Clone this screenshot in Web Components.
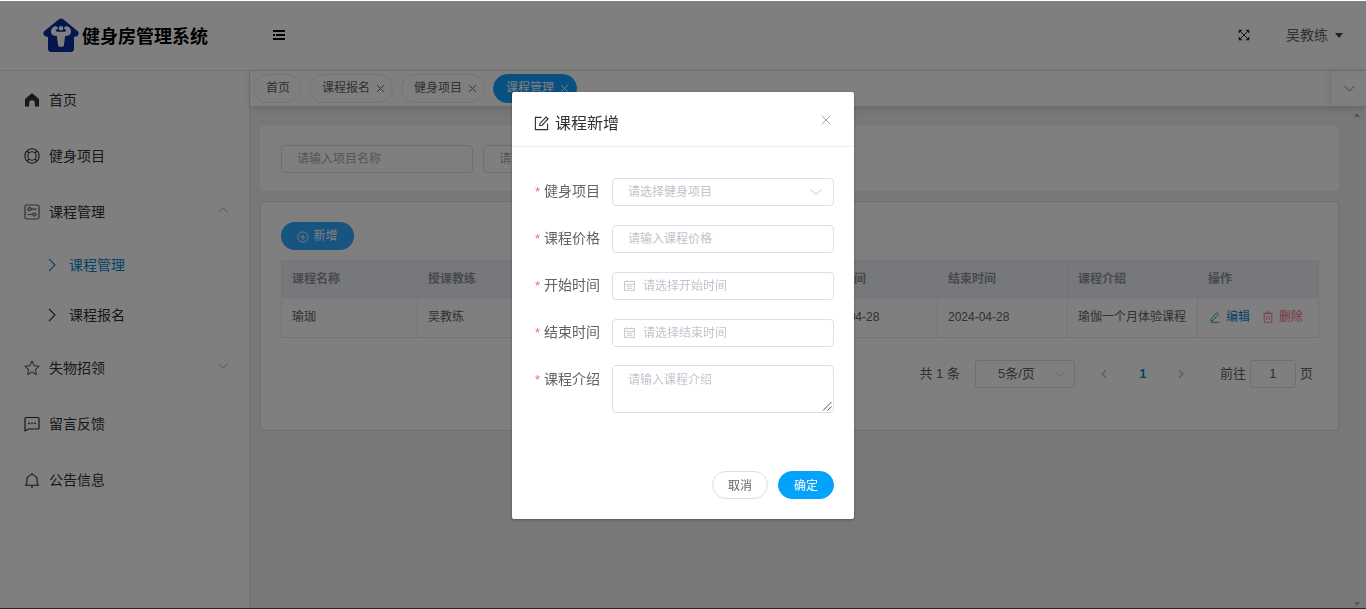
<!DOCTYPE html>
<html lang="zh">
<head>
<meta charset="utf-8">
<title>健身房管理系统</title>
<style>
  html, body { margin: 0; height: 100%; overflow: hidden; background: #1f2a33; }
  body { font-family: "Liberation Sans", "Noto Sans CJK SC", sans-serif; line-height: 1.2; color: #606266; }
</style>
</head>
<body>
<gym-app>
  <app-header slot="header" title="健身房管理系统" user="吴教练"></app-header>
  <side-menu slot="side">
    <menu-row icon="home">首页</menu-row>
    <menu-row icon="help">健身项目</menu-row>
    <menu-row icon="setup" arrow="up">课程管理</menu-row>
    <menu-row sub active>课程管理</menu-row>
    <menu-row sub>课程报名</menu-row>
    <menu-row icon="star" arrow="down">失物招领</menu-row>
    <menu-row icon="chat">留言反馈</menu-row>
    <menu-row icon="bell">公告信息</menu-row>
  </side-menu>
  <tag-bar slot="tabs">
    <tag-chip plain>首页</tag-chip>
    <tag-chip>课程报名</tag-chip>
    <tag-chip>健身项目</tag-chip>
    <tag-chip active>课程管理</tag-chip>
  </tag-bar>
  <search-card slot="main">
    <field-box width="192" muted>请输入项目名称</field-box>
    <field-box width="192" muted>请输入</field-box>
  </search-card>
  <course-card slot="main"></course-card>
</gym-app>
<modal-mask>
  <course-dialog title="课程新增">
    <form-row label="健身项目"><field-box kind="select">请选择健身项目</field-box></form-row>
    <form-row label="课程价格"><field-box>请输入课程价格</field-box></form-row>
    <form-row label="开始时间"><field-box kind="date">请选择开始时间</field-box></form-row>
    <form-row label="结束时间"><field-box kind="date">请选择结束时间</field-box></form-row>
    <form-row label="课程介绍" style="margin-top:-1px;--label-pad:1px"><field-box kind="area">请输入课程介绍</field-box></form-row>
  </course-dialog>
</modal-mask>

<script>
const ICONS = {
  home: '<path fill="currentColor" d="M8 1.500c.4 0 .7.1 1 .4l5.400 4.600c.4.3.6.8.6 1.300V14.500H10.800V11a2.800 2.800 0 0 0-5.600 0v3.500H1V7.800c0-.5.2-1 .6-1.300L7 1.900c.3-.3.6-.4 1-.4z"/>',
  help: '<g fill="none" stroke="currentColor" stroke-width="1.100"><circle cx="8" cy="8" r="7.200"/><circle cx="8" cy="8" r="4.200"/><path d="M3 3l2 2M13 3l-2 2M3 13l2-2M13 13l-2-2"/></g>',
  setup: '<g fill="none" stroke="currentColor" stroke-width="1.200"><rect x="1" y="1" width="14" height="14" rx="1.500"/><circle cx="5.500" cy="5.200" r="1.500"/><path d="M7 5.200h5.500M3.500 10.500h5.500"/><circle cx="10.500" cy="10.500" r="1.500"/></g>',
  star: '<path fill="none" stroke="currentColor" stroke-width="1.100" stroke-linejoin="round" d="M8 1l2.100 4.600 5 .6-3.700 3.400 1 5L8 12.100 3.600 14.600l1-5L.9 6.200l5-.6z"/>',
  chat: '<path fill="none" stroke="currentColor" stroke-width="1.200" stroke-linejoin="round" d="M1 2.500c0-.6.4-1 1-1h12c.6 0 1 .4 1 1v9.500c0 .6-.4 1-1 1H4.500L1 15z"/><g fill="currentColor"><circle cx="5" cy="7.300" r=".9"/><circle cx="8" cy="7.300" r=".9"/><circle cx="11" cy="7.300" r=".9"/></g>',
  bell: '<path fill="none" stroke="currentColor" stroke-width="1.100" d="M.6 13.300h14.800M2.800 13.300V8a5.200 5.200 0 0 1 10.400 0v5.300M8 1v1.700"/><circle cx="8" cy="15" r=".9" fill="currentColor"/>',
  left: '<path fill="none" stroke="currentColor" stroke-width="1.800" d="M10.500 3L5.500 8l5 5"/>',
  next: '<path fill="none" stroke="currentColor" stroke-width="1.800" d="M5.500 3l5 5-5 5"/>',
  up: '<path fill="none" stroke="currentColor" stroke-width="1" d="M2 11l6-6 6 6"/>',
  down: '<path fill="none" stroke="currentColor" stroke-width="1" d="M2 5l6 6 6-6"/>',
  close: '<path fill="none" stroke="currentColor" stroke-width="1.100" d="M2 2l12 12M14 2L2 14"/>',
  tagx: '<path fill="none" stroke="currentColor" stroke-width="1.700" d="M2 2l12 12M14 2L2 14"/>',
  edit: '<g fill="none" stroke="currentColor" stroke-width="1.200"><path d="M8 1.500H1.500v13h13V8"/><path d="M6 10.300l.5-2.600L13 1.200l2 2-6.400 6.600z"/></g>',
  date: '<g fill="none" stroke="currentColor" stroke-width="1.100"><rect x="2" y="3" width="12" height="11"/><path d="M2 6.500h12M5 1.500V3M11 1.500V3M4.500 9h7M4.500 11.500h7"/></g>',
  plus: '<g fill="none" stroke="currentColor" stroke-width="1.100"><circle cx="8" cy="8" r="6.800"/><path d="M8 4.500v7M4.500 8h7"/></g>',
  pen: '<path fill="none" stroke="currentColor" stroke-width="1.100" d="M3 10.500L10.500 2l2.300 2L5.300 12.500l-2.800.8zM2 15h12"/>',
  trash: '<g fill="none" stroke="currentColor" stroke-width="1.100"><path d="M1.500 3.500h13M5.500 3.500V1.500h5v2M3 3.500v11.500h10V3.500M6.300 6.500v5.500M9.700 6.500v5.500"/></g>',
  expand: '<g fill="none" stroke="currentColor" stroke-width="1.300"><path d="M3 3l10 10M13 3L3 13"/></g><g fill="currentColor"><path d="M1 1h5L1 6zM15 1v5l-5-5zM1 15v-5l5 5zM15 15h-5l5-5z"/></g>'
};

class GymIcon extends HTMLElement {
  constructor() {
    super();
    const size = this.getAttribute("size") || 16;
    const name = this.getAttribute("name");
    this.attachShadow({mode: "open"}).innerHTML = `
      <style>
        :host { display: inline-flex; flex: none; width: ${size}px; height: ${size}px; }
        svg { width: 100%; height: 100%; display: block; }
      </style>
      <svg viewBox="0 0 16 16">${ICONS[name] || ""}</svg>`;
  }
}
customElements.define("gym-icon", GymIcon);

class GymApp extends HTMLElement {
  constructor() {
    super();
    this.attachShadow({mode: "open"}).innerHTML = `
      <style>
        :host { display: grid; grid-template: 71px 1fr / 250px 1fr; height: 608px; background: #f0f0f0; position: relative; overflow: hidden; }
        .head { grid-column: 1 / 3; }
        .body { display: flex; flex-direction: column; min-width: 0; }
        .main { padding: 20px 27px 0 10px; display: flex; flex-direction: column; gap: 10px; }
        /* little scrollbar arrows at the right edge */
        .up, .dn { position: absolute; left: 1354px; width: 0; height: 0; border: 3.500px solid transparent; }
        .up { top: 113px; border-top: 0; border-bottom: 4px solid #aaa; }
        .dn { top: 602px; border-bottom: 0; border-top: 4px solid #aaa; }
      </style>
      <div class="head"><slot name="header"></slot></div>
      <slot name="side"></slot>
      <div class="body">
        <slot name="tabs"></slot>
        <div class="main"><slot name="main"></slot></div>
      </div>
      <i class="up"></i><i class="dn"></i>`;
  }
}
customElements.define("gym-app", GymApp);

class AppHeader extends HTMLElement {
  constructor() {
    super();
    this.attachShadow({mode: "open"}).innerHTML = `
      <style>
        :host { display: flex; align-items: center; height: 70px; background: #fff; border-bottom: 1px solid #e4e4e4; }
        .logo { margin: 0 0 0 43px; width: 36px; height: 34px; flex: none; }
        h1 { margin: 4px 0 0 3px; font-size: 18px; line-height: 24px; font-weight: 700; color: #000; white-space: nowrap; }
        .fold { margin-left: 65px; width: 12px; height: 10px; display: block; }
        .grow { flex: 1; }
        gym-icon { color: #222; }
        .user { margin-left: 36px; font-size: 14px; color: #606266; }
        .caret { margin: 0 23px 0 7px; width: 0; height: 0; border: 4px solid transparent; border-top: 5px solid #444; border-bottom: 0; }
      </style>
      <svg class="logo" viewBox="0 0 36 34">
        <path fill="#0a2a9e" d="M16 1.300c1.300-1.200 2.900-1.200 4.200 0l14.600 11.900c1.600 1.500 1 4.500-1.800 5.300L31 19v11.500c0 2-1 3.500-3 3.500H8c-2 0-3-1.500-3-3.500V19l-2-.5C.2 17.700-.4 14.700 1.200 13.200z"/>
        <path fill="#fff" d="M10.800 8.800c2-1 3.800-.3 4 1.200.1 1-.6 1.600-2 1.700-.1 1.300.9 2.100 2.200 2.100h6c1.300 0 2.300-.8 2.200-2.100-1.400-.1-2.100-.7-2-1.700.2-1.500 2-2.200 4-1.200 2.300 1.200 3.600 4.600 2.300 7-1 1.800-3.300 2.500-5.300 2l-1.300 9.500c-.1 1-.9 1.500-2.900 1.500s-2.800-.5-2.900-1.500L13.800 17.800c-2 .5-4.300-.2-5.300-2-1.300-2.400 0-5.800 2.300-7z"/>
        <circle cx="18" cy="10.300" r="2.300" fill="#fff"/>
      </svg>
      <h1>${this.getAttribute("title")}</h1>
      <svg class="fold" viewBox="0 0 12 10"><path fill="#000" d="M0 0h12v2H0zM3 4h9v2H3zM0 8h12v2H0zM0 4h2v2H0z"/></svg>
      <div class="grow"></div>
      <gym-icon name="expand" size="12"></gym-icon>
      <span class="user">${this.getAttribute("user")}</span>
      <span class="caret"></span>`;
  }
}
customElements.define("app-header", AppHeader);

class SideMenu extends HTMLElement {
  constructor() {
    super();
    this.attachShadow({mode: "open"}).innerHTML = `
      <style>
        :host { display: block; background: #fff; border-right: 1px solid #e6e6e6; padding-top: 1px; }
      </style>
      <slot></slot>`;
  }
}
customElements.define("side-menu", SideMenu);

class MenuRow extends HTMLElement {
  constructor() {
    super();
    const sub = this.hasAttribute("sub");
    const icon = this.getAttribute("icon");
    const arrow = this.getAttribute("arrow");
    const soft = icon === "setup" || icon === "star";
    this.attachShadow({mode: "open"}).innerHTML = `
      <style>
        :host { display: flex; align-items: center; height: 56px; padding-left: 24px; font-size: 14px; color: #303133; position: relative; }
        :host([sub]) { height: 50px; padding-left: 48px; }
        :host([active]) { color: #0a86cf; }
        .ic { margin-right: 9px; ${soft ? "color:#606266;" : ""} }
        :host([sub]) .ic { margin-right: 13px; width: 8px; height: 14px; }
        .arrow { position: absolute; left: 217px; top: 20px; color: #909399; }
        svg { display: block; }
      </style>
      ${sub
        ? `<svg class="ic" viewBox="0 0 8 14"><path fill="none" stroke="currentColor" stroke-width="1.100" d="M1 1l6 6-6 6"/></svg>`
        : `<gym-icon class="ic" name="${icon}"></gym-icon>`}
      <slot></slot>
      ${arrow ? `<gym-icon class="arrow" name="${arrow}" size="12"></gym-icon>` : ""}`;
  }
}
customElements.define("menu-row", MenuRow);

class TagBar extends HTMLElement {
  constructor() {
    super();
    this.attachShadow({mode: "open"}).innerHTML = `
      <style>
        :host { display: flex; height: 35px; background: #fff; box-shadow: 0 2px 8px rgba(0,0,0,.14); position: relative; }
        .list { flex: 1; display: flex; gap: 8px; padding: 3px 0 0 3px; box-sizing: border-box; }
        .more { width: 34px; display: flex; align-items: center; justify-content: center; color: #606266; box-shadow: -3px 0 6px rgba(0,0,0,.08); }
      </style>
      <div class="list"><slot></slot></div>
      <div class="more"><gym-icon name="down" size="13"></gym-icon></div>`;
  }
}
customElements.define("tag-bar", TagBar);

class TagChip extends HTMLElement {
  constructor() {
    super();
    const plain = this.hasAttribute("plain");
    this.attachShadow({mode: "open"}).innerHTML = `
      <style>
        :host { display: inline-flex; align-items: center; height: 29px; box-sizing: border-box; padding: 0 10px 0 12px; border: 1px solid #e4e7ed; border-radius: 15px; font-size: 12px; color: #606266; }
        :host([active]) { background: #10a0ff; border-color: #10a0ff; color: #fff; }
        gym-icon { margin: 0 -3px 0 6px; color: #606266; }
        :host([active]) gym-icon { color: #fff; }
      </style>
      <slot></slot>${plain ? "" : `<gym-icon name="tagx" size="9"></gym-icon>`}`;
  }
}
customElements.define("tag-chip", TagChip);

class SearchCard extends HTMLElement {
  constructor() {
    super();
    this.attachShadow({mode: "open"}).innerHTML = `
      <style>
        :host { display: flex; gap: 10px; align-items: flex-start; height: 65px; box-sizing: border-box; padding: 19px 21px; background: #fff; border-radius: 4px; }
      </style>
      <slot></slot>`;
  }
}
customElements.define("search-card", SearchCard);

class FieldBox extends HTMLElement {
  constructor() {
    super();
    const kind = this.getAttribute("kind") || "text";
    const width = this.getAttribute("width");
    this.attachShadow({mode: "open"}).innerHTML = `
      <style>
        :host { display: flex; align-items: center; flex: ${width ? "none" : "1"}; ${width ? `width:${width}px;` : ""} height: 28px; box-sizing: border-box; padding: 0 15px; border: 1px solid #dcdfe6; border-radius: 4px; background: #fff; font-size: 12px; color: #c0c4cc; position: relative; }
        :host([muted]) { color: #a8abb2; }
        :host([kind="date"]) { padding-left: 10px; }
        :host([kind="area"]) { height: 48px; align-items: flex-start; padding-top: 7px; }
        .cal { margin: -2px 7px 0 0; }
        .chev { position: absolute; right: 10px; top: 6px; }
        .grip { position: absolute; right: 1px; bottom: 1px; width: 10px; height: 10px; }
      </style>
      ${kind === "date" ? `<gym-icon class="cal" name="date" size="13"></gym-icon>` : ""}
      <slot></slot>
      ${kind === "select" ? `<gym-icon class="chev" name="down" size="14"></gym-icon>` : ""}
      ${kind === "area" ? `<svg class="grip" viewBox="0 0 10 10"><path fill="none" stroke="#555" d="M1 9.500L9.500 1M5.500 9.500L9.500 5.500"/></svg>` : ""}`;
  }
}
customElements.define("field-box", FieldBox);

class CourseCard extends HTMLElement {
  constructor() {
    super();
    const heads = ["课程名称", "授课教练", "", "", "开始时间", "结束时间", "课程介绍", "操作"];
    const cells = ["瑜珈", "吴教练", "", "", "2024-04-28", "2024-04-28", "瑜伽一个月体验课程"];
    const widths = [136, 130, 130, 130, 130, 130, 130, 121];
    this.attachShadow({mode: "open"}).innerHTML = `
      <style>
        :host { display: block; height: 230px; box-sizing: border-box; padding: 20px; background: #fff; border: 1px solid #dcdfe6; border-radius: 4px; }
        .add { display: flex; align-items: center; justify-content: center; gap: 4px; width: 73px; height: 28px; box-sizing: border-box; padding-top: 1px; border-radius: 14px; background: #2fa8ff; color: #fff; font-size: 12px; }
        table { margin-top: 10px; border-collapse: collapse; table-layout: fixed; width: 1037px; font-size: 12px; }
        th, td { border: 1px solid #e6e9f0; padding: 0 10px; text-align: left; white-space: nowrap; overflow: hidden; }
        th { height: 36px; background: #eef1f6; color: #909399; font-weight: 700; }
        td { height: 39px; color: #606266; }
        .ops { display: flex; align-items: center; color: #0a86cf; padding-left: 1px; }
        .ops gym-icon { margin-right: 5px; }
        .del { color: #f56c8c; margin-left: 12px; display: inline-flex; align-items: center; }
        .pager { display: flex; align-items: center; height: 28px; margin-top: 22px; padding-right: 5px; justify-content: flex-end; font-size: 13px; }
        .size { display: flex; align-items: center; box-sizing: border-box; width: 100px; height: 28px; margin-left: 15px; padding: 0 8px 0 22px; border: 1px solid #dcdfe6; border-radius: 3px; }
        .size span { flex: 1; }
        .size gym-icon { color: #c0c4cc; }
        .pg { display: flex; align-items: center; margin-left: 23px; color: #b4b8bf; }
        .pg b { width: 38px; margin: 0 13px 0 14px; text-align: center; color: #0a86cf; font-size: 13px; }
        .jump { margin-left: 33px; }
        .num { box-sizing: border-box; width: 46px; height: 28px; margin: 0 4px; display: flex; align-items: center; justify-content: center; border: 1px solid #dcdfe6; border-radius: 3px; }
      </style>
      <div class="add"><gym-icon name="plus" size="12"></gym-icon>新增</div>
      <table>
        <colgroup>${widths.map(w => `<col style="width:${w}px">`).join("")}</colgroup>
        <tr>${heads.map(h => `<th>${h}</th>`).join("")}</tr>
        <tr>${cells.map(c => `<td>${c}</td>`).join("")}
          <td><div class="ops"><gym-icon name="pen" size="12"></gym-icon>编辑<span class="del"><gym-icon name="trash" size="12"></gym-icon>删除</span></div></td>
        </tr>
      </table>
      <div class="pager">
        <span>共 1 条</span>
        <div class="size"><span>5条/页</span><gym-icon name="down" size="12"></gym-icon></div>
        <div class="pg"><gym-icon name="left" size="12"></gym-icon><b>1</b><gym-icon name="next" size="12"></gym-icon></div>
        <span class="jump">前往</span>
        <span class="num">1</span>
        <span>页</span>
      </div>`;
  }
}
customElements.define("course-card", CourseCard);

class ModalMask extends HTMLElement {
  constructor() {
    super();
    this.attachShadow({mode: "open"}).innerHTML = `
      <style>
        :host { position: fixed; left: 0; right: 0; top: 1px; bottom: 1px; background: rgba(0,0,0,.5); display: flex; justify-content: center; align-items: flex-start; padding-top: 91px; box-sizing: border-box; }
      </style>
      <slot></slot>`;
  }
}
customElements.define("modal-mask", ModalMask);

class CourseDialog extends HTMLElement {
  constructor() {
    super();
    this.attachShadow({mode: "open"}).innerHTML = `
      <style>
        :host { display: block; width: 342px; height: 427px; box-sizing: border-box; background: #fff; border-radius: 2px; box-shadow: 0 1px 3px rgba(0,0,0,.3); position: relative; }
        .top { display: flex; align-items: center; height: 55px; padding: 8px 0 0 22px; box-sizing: border-box; border-bottom: 1px solid #ebeef5; font-size: 16px; color: #303133; }
        .top span { margin-top: 2px; }
        .top gym-icon { margin-right: 6px; color: #303133; }
        .x { position: absolute; top: 22px; left: 308px; color: #909399; }
        .form { display: flex; flex-direction: column; gap: 19px; padding: 31px 20px 0 22px; }
        .foot { position: absolute; right: 20px; bottom: 20px; display: flex; gap: 10px; }
        .btn { width: 56px; height: 28px; box-sizing: border-box; padding-top: 2px; display: flex; align-items: center; justify-content: center; border: 1px solid #dcdfe6; border-radius: 14px; font-size: 12px; color: #606266; }
        .ok { background: #05a2fb; border-color: #05a2fb; color: #fff; }
      </style>
      <div class="top"><gym-icon name="edit" size="15"></gym-icon><span>${this.getAttribute("title")}</span></div>
      <gym-icon class="x" name="close" size="12"></gym-icon>
      <div class="form"><slot></slot></div>
      <div class="foot"><div class="btn">取消</div><div class="btn ok">确定</div></div>`;
  }
}
customElements.define("course-dialog", CourseDialog);

class FormRow extends HTMLElement {
  constructor() {
    super();
    this.attachShadow({mode: "open"}).innerHTML = `
      <style>
        :host { display: flex; align-items: flex-start; font-size: 14px; color: #606266; }
        label { width: 66px; margin-right: 12px; padding-top: var(--label-pad, 0); flex: none; text-align: right; line-height: 26px; white-space: nowrap; }
        i { color: #f56c6c; font-style: normal; margin-right: 4px; font-size: 13px; }
        .box { flex: 1; display: flex; }
      </style>
      <label><i>*</i>${this.getAttribute("label")}</label>
      <div class="box"><slot></slot></div>`;
  }
}
customElements.define("form-row", FormRow);
</script>
</body>
</html>
